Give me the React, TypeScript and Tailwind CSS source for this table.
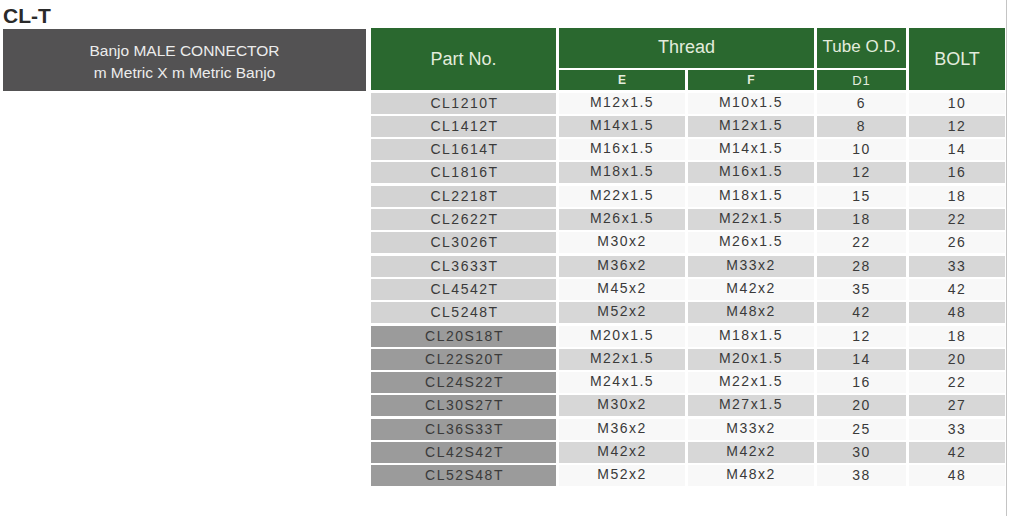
import React from "react";

const rows: [string, string, string, string, string][] = [
  ["CL1210T", "M12x1.5", "M10x1.5", "6", "10"],
  ["CL1412T", "M14x1.5", "M12x1.5", "8", "12"],
  ["CL1614T", "M16x1.5", "M14x1.5", "10", "14"],
  ["CL1816T", "M18x1.5", "M16x1.5", "12", "16"],
  ["CL2218T", "M22x1.5", "M18x1.5", "15", "18"],
  ["CL2622T", "M26x1.5", "M22x1.5", "18", "22"],
  ["CL3026T", "M30x2", "M26x1.5", "22", "26"],
  ["CL3633T", "M36x2", "M33x2", "28", "33"],
  ["CL4542T", "M45x2", "M42x2", "35", "42"],
  ["CL5248T", "M52x2", "M48x2", "42", "48"],
  ["CL20S18T", "M20x1.5", "M18x1.5", "12", "18"],
  ["CL22S20T", "M22x1.5", "M20x1.5", "14", "20"],
  ["CL24S22T", "M24x1.5", "M22x1.5", "16", "22"],
  ["CL30S27T", "M30x2", "M27x1.5", "20", "27"],
  ["CL36S33T", "M36x2", "M33x2", "25", "33"],
  ["CL42S42T", "M42x2", "M42x2", "30", "42"],
  ["CL52S48T", "M52x2", "M48x2", "38", "48"],
];

export default function App() {
  return (
    <div className="w-[1007px] h-[516px] bg-white border-r border-[#c4c4c4] font-['Liberation_Sans',Arial,sans-serif] overflow-hidden">
      <div className="h-[28px] pt-[5px] pl-[3px] text-[21px] leading-[21px] font-bold text-[#2a2a2a]">
        CL-T
      </div>
      <div className="flex pl-[3px] gap-[5px] items-start">
        <div className="mt-[1px] w-[363px] h-[62px] bg-[#535253] flex flex-col items-center justify-center pt-[3px] text-[#ececec] text-[15.5px] leading-[22px]">
          <div>Banjo MALE CONNECTOR</div>
          <div>m Metric X m Metric Banjo</div>
        </div>
        <div className="grid grid-cols-[185px_126px_126px_89px_96px] gap-x-[3px] gap-y-[2.3px] auto-rows-[21px] grid-rows-[40px_20px] text-[#3a3a3a]">
          <div className="row-span-2 bg-[#2a682f] text-[#e3ecdd] text-[18px] flex items-center justify-center">
            Part No.
          </div>
          <div className="col-span-2 bg-[#2a682f] text-[#e3ecdd] text-[18px] flex items-center justify-center pb-[2px]">
            Thread
          </div>
          <div className="bg-[#2a682f] text-[#e3ecdd] text-[17px] flex items-center justify-center pb-[2px]">
            Tube O.D.
          </div>
          <div className="row-span-2 bg-[#2a682f] text-[#e3ecdd] text-[18px] flex items-center justify-center">
            BOLT
          </div>
          <div className="bg-[#2a682f] text-[#e3ecdd] text-[12px] font-bold flex items-center justify-center">
            E
          </div>
          <div className="bg-[#2a682f] text-[#e3ecdd] text-[12px] font-bold flex items-center justify-center">
            F
          </div>
          <div className="bg-[#2a682f] text-[#e3ecdd] text-[13px] tracking-[1px] flex items-center justify-center">
            D1
          </div>
          {rows.map((r, i) => {
            const even = i % 2 === 1;
            const alt = even ? "bg-[#d7d7d7]" : "bg-[#f8f8f8]";
            const part = i < 10 ? "bg-[#d3d3d3]" : "bg-[#9b9b9b]";
            return (
              <React.Fragment key={r[0]}>
                <div className={`${part} flex items-center justify-center text-[14px] tracking-[1.5px] pl-[2px]`}>
                  {r[0]}
                </div>
                <div className={`${alt} flex items-center justify-center text-[14px] tracking-[1.5px] pb-[2px]`}>
                  {r[1]}
                </div>
                <div className={`${alt} flex items-center justify-center text-[14px] tracking-[1.5px] pb-[2px]`}>
                  {r[2]}
                </div>
                <div className={`${alt} flex items-center justify-center text-[14px] tracking-[1.5px]`}>
                  {r[3]}
                </div>
                <div className={`${alt} flex items-center justify-center text-[14px] tracking-[1.5px]`}>
                  {r[4]}
                </div>
              </React.Fragment>
            );
          })}
        </div>
      </div>
    </div>
  );
}
